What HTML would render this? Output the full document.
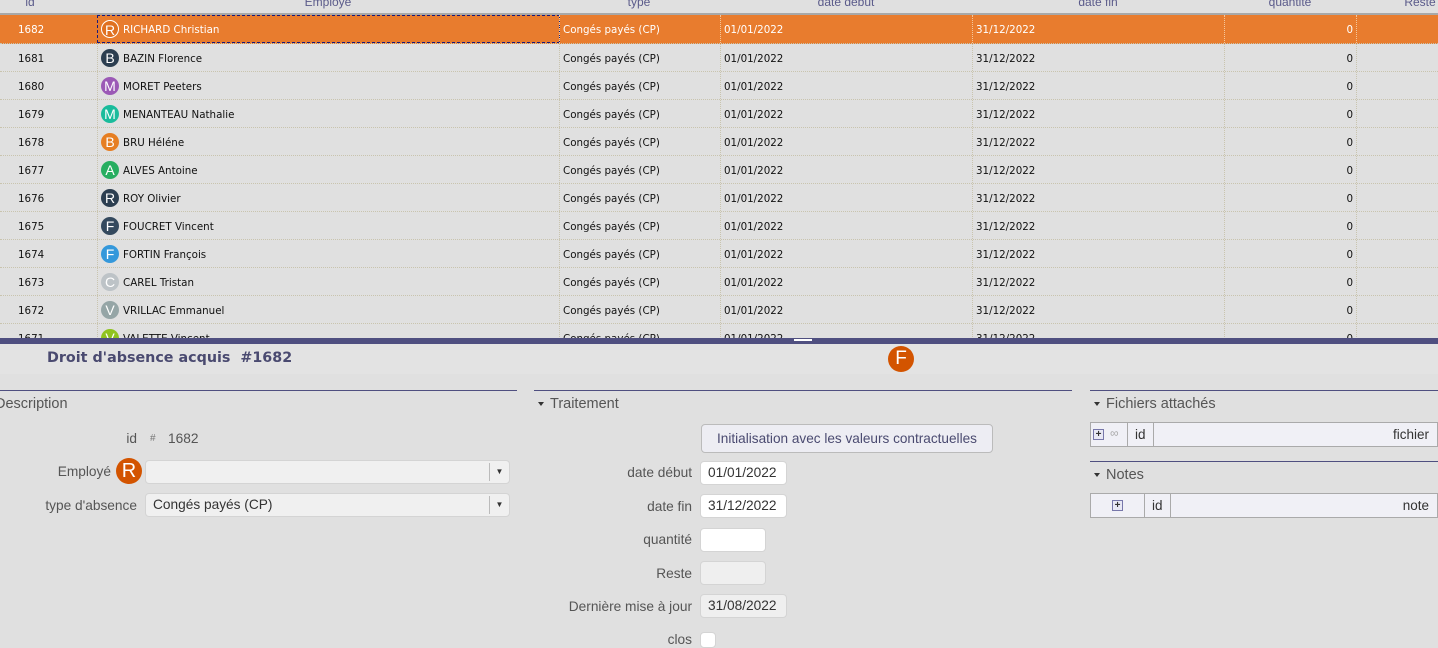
<!DOCTYPE html>
<html><head><meta charset="utf-8"><style>
*{box-sizing:border-box;margin:0;padding:0}
body{width:1438px;height:642px;overflow:hidden;background:#e0e0e0;position:relative;font-family:"Liberation Sans",sans-serif}
.a{position:absolute}
.hd{top:0;height:15px;left:0;width:1438px;background:#e0e0e0;border-bottom:2px solid #a8a8a8}
.hd span{position:absolute;top:-5px;color:#5a5a8a;font-size:12px;transform:translateX(-50%)}
.row{position:absolute;left:0;width:1438px;height:28px;border-bottom:1px dotted #c9c4ae;font-family:"DejaVu Sans",sans-serif;font-size:10.3px;color:#111}
.row div{position:absolute;top:0;height:100%;line-height:30px;border-left:1px dotted #c9c4ae;padding-left:3px;white-space:nowrap}
.sel{background:#e87c2e;color:#fff}
.sel div{border-left-color:#f5c79b}
.av{display:inline-block;width:18px;height:18px;border-radius:50%;color:#fff;text-align:center;line-height:18px;font-size:14px;font-family:"Liberation Sans",sans-serif;vertical-align:middle;margin-right:4px;margin-top:-3px}
.lbl{position:absolute;color:#555;font-size:13.7px;text-align:right}
.inp{position:absolute;background:#fff;border:1px solid #d4d4d4;border-radius:4px;font-size:13.7px;color:#333;padding-left:7px;line-height:22px}
.sec{position:absolute;border-top:1px solid #4f4f80;color:#555;font-size:14.5px}
.tri{display:inline-block;width:0;height:0;border-left:3px solid transparent;border-right:3px solid transparent;border-top:4px solid #333;vertical-align:middle;margin-right:6px}
.tbl{position:absolute;background:#f0f0f6;border:1px solid #aaa;height:25px;font-size:13.5px;color:#333}
.tbl div{position:absolute;top:0;height:100%;line-height:23px;border-left:1px solid #aaa}
.plus{position:absolute;width:11px;height:11px;border:1px solid #7777aa;background:#e8e8f4;font-size:10px;line-height:9px;text-align:center;color:#333;font-weight:bold}
</style></head><body>
<div class="a hd"><span style="left:30px">id</span><span style="left:328px">Employé</span><span style="left:639px">type</span><span style="left:846px">date début</span><span style="left:1098px">date fin</span><span style="left:1290px">quantité</span><span style="left:1420px">Reste</span></div>

<div class="row sel" style="top:15px;height:29px">
<div style="left:0;width:97px;border:none;padding-left:18px">1682</div>
<div style="left:97px;width:463px;border:1px dashed #1a1a7a;line-height:28px;padding-left:3px"><span class="av" style="border:1px solid #fff;background:#e07020">R</span>RICHARD Christian</div>
<div style="left:559px;width:161px">Congés payés (CP)</div>
<div style="left:720px;width:252px">01/01/2022</div>
<div style="left:972px;width:252px">31/12/2022</div>
<div style="left:1224px;width:132px;text-align:right;padding-right:3px">0</div>
<div style="left:1356px;width:82px"></div>
</div>
<div id="rows"></div>
<script>
var d=[["1681","B","#2c3e50","BAZIN Florence"],["1680","M","#9b59b6","MORET Peeters"],["1679","M","#1abc9c","MENANTEAU Nathalie"],["1678","B","#e67e22","BRU Héléne"],["1677","A","#27ae60","ALVES Antoine"],["1676","R","#2c3e50","ROY Olivier"],["1675","F","#34495e","FOUCRET Vincent"],["1674","F","#3498db","FORTIN François"],["1673","C","#bdc3c7","CAREL Tristan"],["1672","V","#95a5a6","VRILLAC Emmanuel"],["1671","V","#8fc31f","VALETTE Vincent"]];
var h="";d.forEach(function(r,i){h+='<div class="row" style="top:'+(44+i*28)+'px"><div style="left:0;width:97px;border:none;padding-left:18px">'+r[0]+'</div><div style="left:97px;width:462px"><span class="av" style="background:'+r[2]+'">'+r[1]+'</span>'+r[3]+'</div><div style="left:559px;width:161px">Congés payés (CP)</div><div style="left:720px;width:252px">01/01/2022</div><div style="left:972px;width:252px">31/12/2022</div><div style="left:1224px;width:132px;text-align:right;padding-right:3px">0</div><div style="left:1356px;width:82px"></div></div>'});
document.getElementById("rows").innerHTML=h;
</script>

<div class="a" style="top:338px;left:0;width:1438px;height:304px;background:#e0e0e0"></div>
<div class="a" style="top:338px;left:0;width:1438px;height:6px;background:#4f4f80"></div>
<div class="a" style="top:339px;left:794px;width:18px;height:2px;background:#fff"></div>
<div class="a" style="top:344px;left:0;width:1438px;height:30px;background:#e3e3e3"></div>
<div class="a" style="top:350px;left:47px;font-weight:bold;color:#4a4a70;font-family:'DejaVu Sans',sans-serif;font-size:14.3px">Droit d'absence acquis&nbsp; #1682</div>
<div class="a" style="top:346px;left:888px;width:26px;height:26px;border-radius:50%;background:#d35400;color:#fff;font-size:19px;text-align:center;line-height:26px">F</div>

<div class="sec" style="top:390px;width:522px;padding-top:5px;left:-5px">Description</div>
<div class="sec" style="top:390px;left:534px;width:538px;padding-top:5px;padding-left:4px"><span class="tri"></span>Traitement</div>
<div class="sec" style="top:390px;left:1090px;width:348px;padding-top:5px;padding-left:4px"><span class="tri"></span>Fichiers attachés</div>
<div class="sec" style="top:461px;left:1090px;width:348px;padding-top:5px;padding-left:4px"><span class="tri"></span>Notes</div>

<div class="lbl" style="top:431px;left:0;width:137px">id</div>
<div class="a" style="top:433px;left:150px;font-size:10px;color:#777">#</div>
<div class="a" style="top:431px;left:168px;font-size:13.7px;color:#555">1682</div>
<div class="lbl" style="top:464px;left:0;width:111px">Employé</div>
<div class="a" style="top:458px;left:116px;width:26px;height:26px;border-radius:50%;background:#d35400;color:#fff;font-size:20px;text-align:center;line-height:26px">R</div>
<div class="inp" style="top:460px;left:145px;width:365px;height:24px;background:#f0f0f0"></div>
<div class="a" style="top:463px;left:489px;height:18px;border-left:1px solid #bbb;width:20px;font-size:8px;text-align:center;line-height:18px;color:#333">▼</div>
<div class="lbl" style="top:498px;left:0;width:137px">type d'absence</div>
<div class="inp" style="top:493px;left:145px;width:365px;height:24px;background:#f0f0f0">Congés payés (CP)</div>
<div class="a" style="top:496px;left:489px;height:18px;border-left:1px solid #bbb;width:20px;font-size:8px;text-align:center;line-height:18px;color:#333">▼</div>

<div class="a" style="top:424px;left:701px;width:292px;height:29px;background:#ededf3;border:1px solid #bbb;border-radius:4px;font-size:13.6px;color:#4a4a70;text-align:center;line-height:27px">Initialisation avec les valeurs contractuelles</div>
<div class="lbl" style="top:465px;left:540px;width:152px">date début</div>
<div class="inp" style="top:461px;left:700px;width:87px;height:24px">01/01/2022</div>
<div class="lbl" style="top:499px;left:540px;width:152px">date fin</div>
<div class="inp" style="top:494px;left:700px;width:87px;height:24px">31/12/2022</div>
<div class="lbl" style="top:532px;left:540px;width:152px">quantité</div>
<div class="inp" style="top:528px;left:700px;width:66px;height:24px"></div>
<div class="lbl" style="top:566px;left:540px;width:152px">Reste</div>
<div class="inp" style="top:561px;left:700px;width:66px;height:24px;background:#efefef"></div>
<div class="lbl" style="top:599px;left:540px;width:152px">Dernière mise à jour</div>
<div class="inp" style="top:594px;left:700px;width:87px;height:24px;background:#efefef">31/08/2022</div>
<div class="lbl" style="top:632px;left:540px;width:152px">clos</div>
<div class="inp" style="top:632px;left:700px;width:16px;height:16px"></div>

<div class="tbl" style="top:422px;left:1090px;width:348px">
<div style="left:0;width:36px;border:none"><span class="plus" style="left:2px;top:6px">+</span><span style="position:absolute;left:19px;top:-1px;color:#aaa;font-size:12px">∞</span></div>
<div style="left:36px;width:27px;padding-left:7px">id</div>
<div style="left:62px;width:286px;text-align:right;padding-right:10px">fichier</div>
</div>
<div class="tbl" style="top:493px;left:1090px;width:348px">
<div style="left:0;width:53px;border:none"><span class="plus" style="left:21px;top:6px">+</span></div>
<div style="left:53px;width:27px;padding-left:7px">id</div>
<div style="left:79px;width:269px;text-align:right;padding-right:10px">note</div>
</div>
</body></html>
